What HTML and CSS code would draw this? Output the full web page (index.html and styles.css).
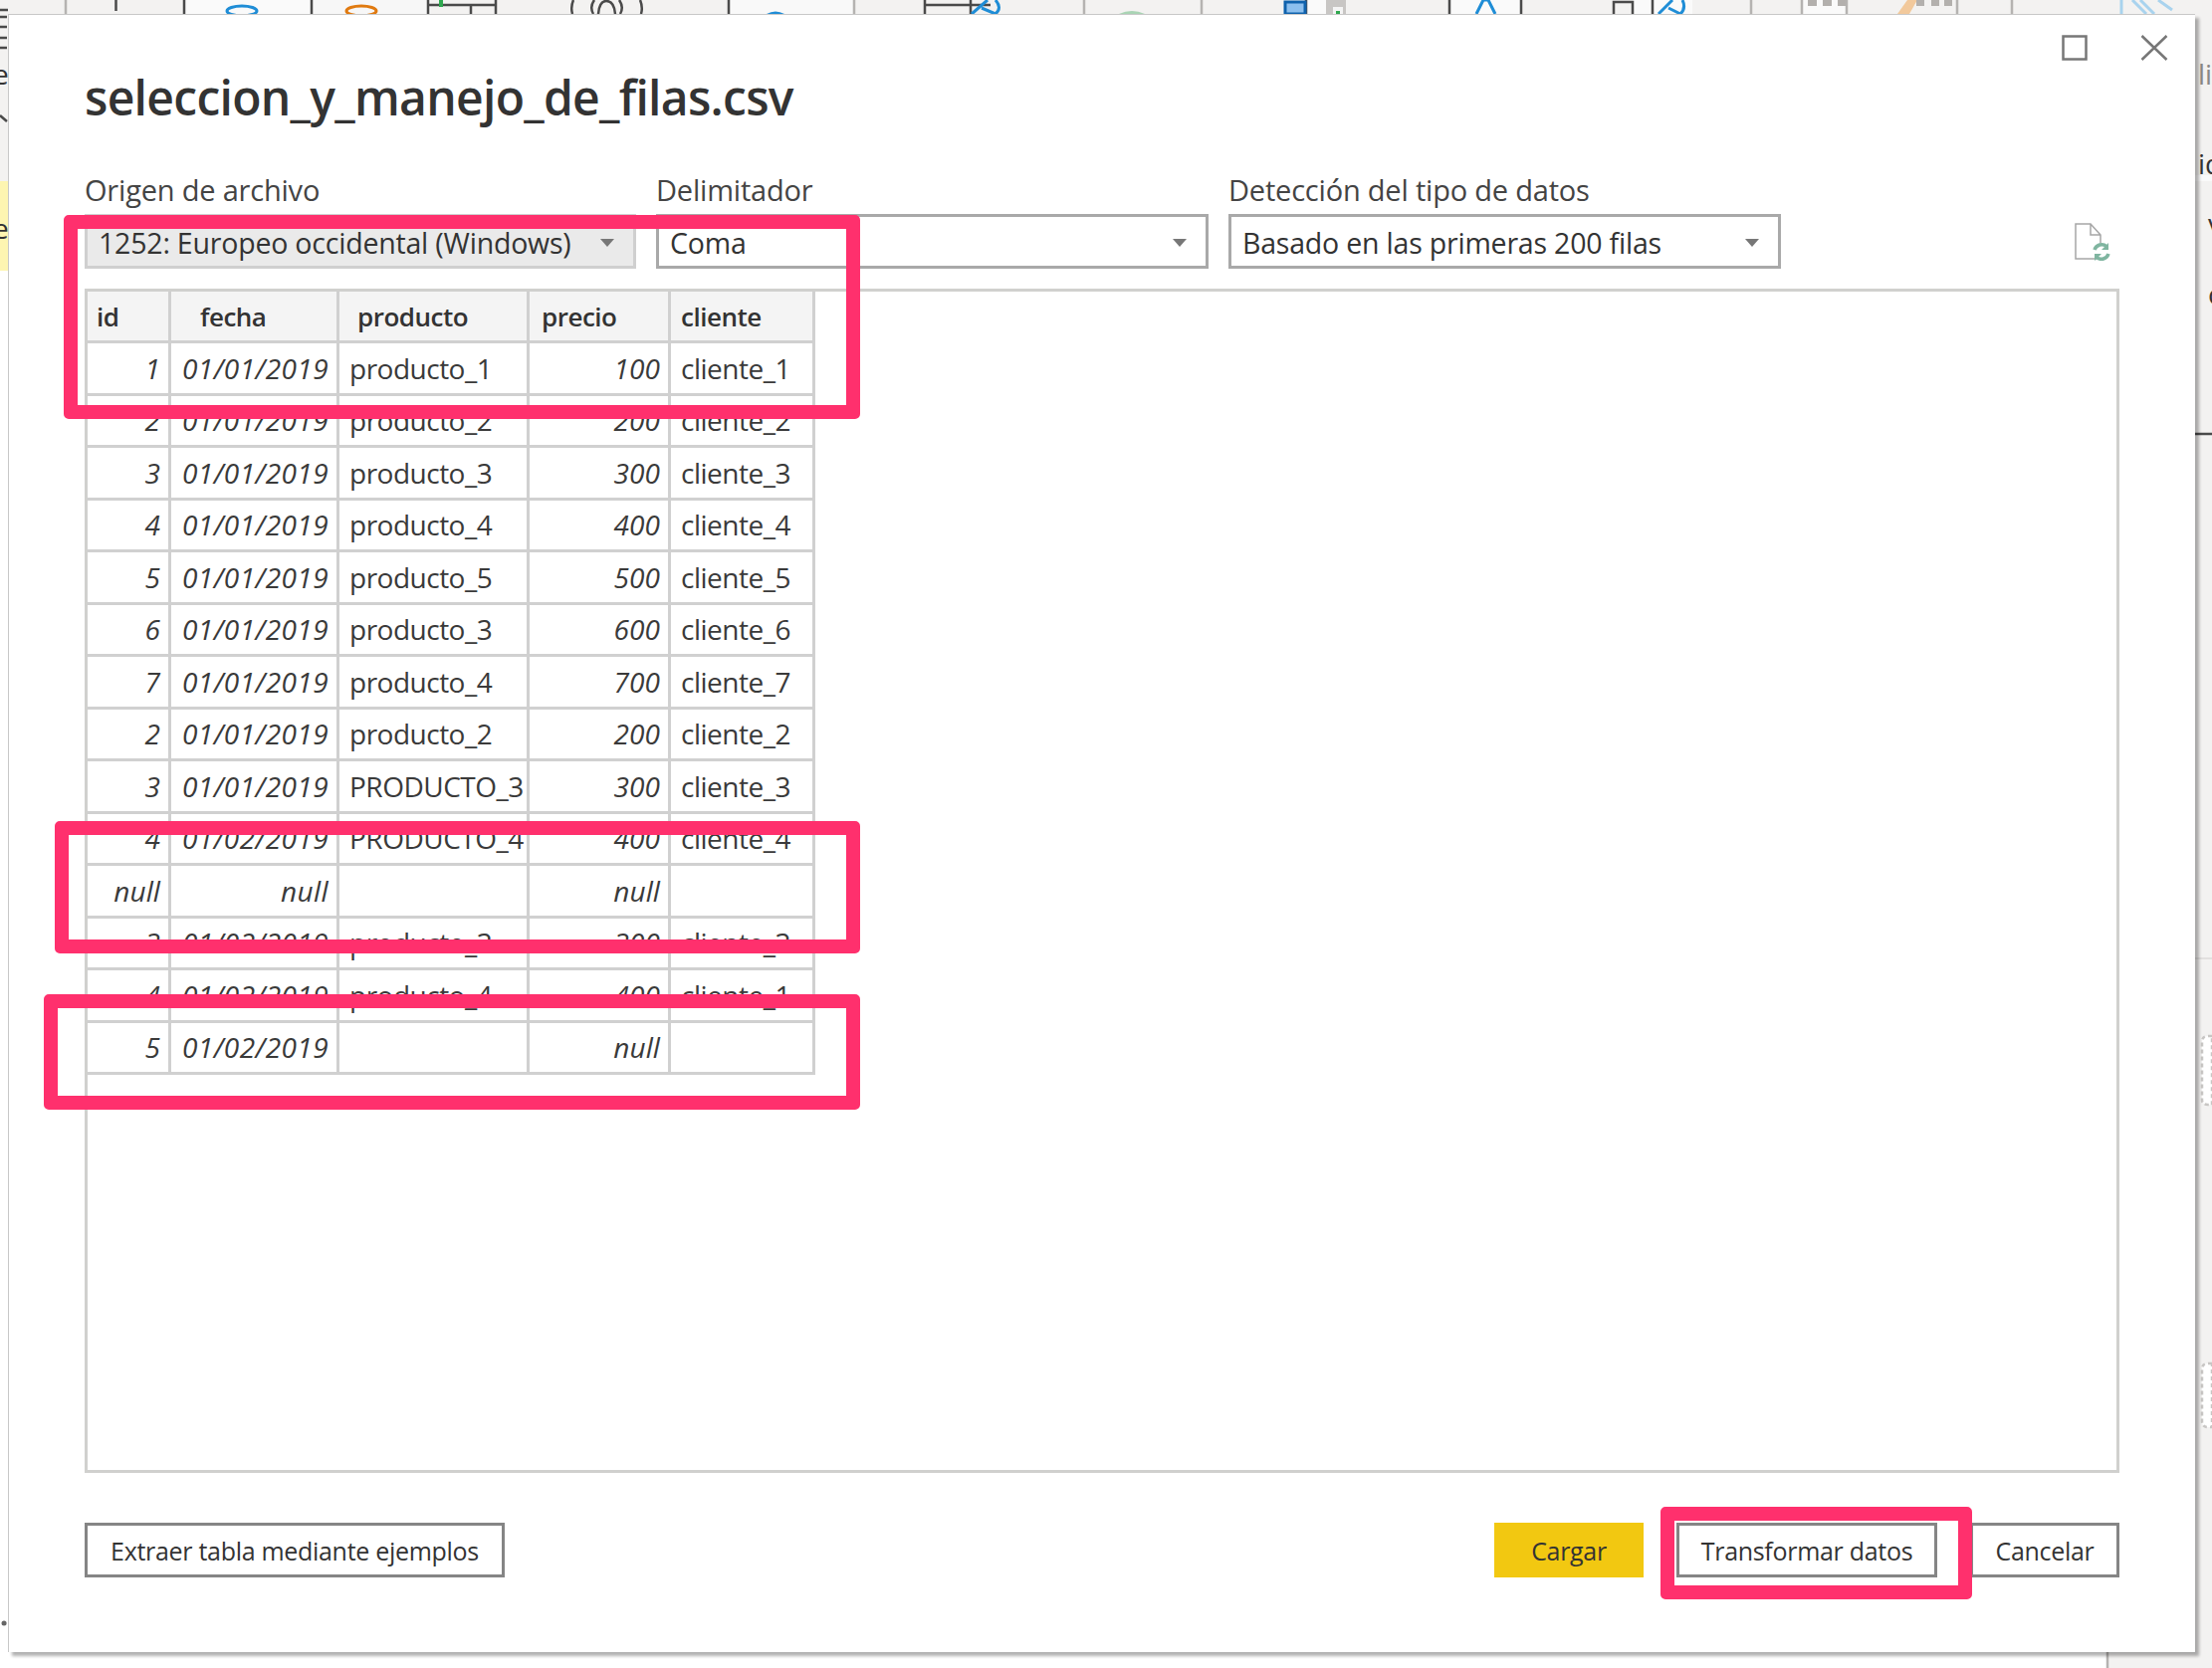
FILE: index.html
```html
<!DOCTYPE html>
<html lang="en">
<head>
  <meta charset="UTF-8">
  <title>seleccion_y_manejo_de_filas.csv</title>
  <link rel="stylesheet" href="styles.css">
</head>
<body>
  <!-- what is left of the app behind the dialog -->
  <svg class="backdrop" width="2222" height="1676" viewBox="0 0 2222 1676">
    <rect x="0" y="272" width="9" height="1404" fill="#fff"/>
    <rect x="0" y="1660" width="2117" height="16" fill="#fff"/>
    <rect x="0" y="182" width="9" height="90" fill="#fdf5b1"/>
    <rect x="185" y="0" width="128" height="14" fill="#fafafa"/>
    <rect x="313" y="0" width="120" height="14" fill="#f7f7f7"/>
    <rect x="732" y="0" width="126" height="14" fill="#f9f9f9"/>
    <rect x="1312" y="0" width="20" height="14" fill="#fafafa"/>
    <rect x="1456" y="0" width="72" height="14" fill="#fafafa"/>
    <rect x="1640" y="0" width="60" height="14" fill="#fafafa"/>
    <rect x="1810" y="0" width="45" height="14" fill="#fafafa"/>
    <g class="tick-gray">
      <path d="M66 0V14M1089 0V14M858 0V14M1207 0V14M1759 0V14M1810 0V14M1855 0V14M1966 0V14M2021 0V14"/>
    </g>
    <g class="tick-dark">
      <path d="M116.500 0V11M185 0V14M313 0V14M430 0V14M498 0V14M732 0V14M929 0V14M1312 0V14M1456 0V14M1528 0V14M1660 0V14"/>
      <path d="M430 5H498M473 5V14M995 5H975M929 5H975M975 0V14"/>
      <path d="M576 0Q573 7 575 14M643 0Q646 7 644 14M597 0Q592 7 596 14M622 0Q627 7 623 14"/>
      <path d="M601 14Q602 1 609 1Q617 1 618 14"/>
      <path d="M1621 14V2H1640V14"/>
      <path d="M0 10H8M0 17H7M0 27H7M0 38H7M0 48H7M0 116L7 122"/>
    </g>
    <ellipse cx="243" cy="11" rx="15" ry="5" fill="none" stroke="#1f8dd6" stroke-width="3"/>
    <ellipse cx="363" cy="11" rx="15" ry="5" fill="none" stroke="#e07a10" stroke-width="3"/>
    <rect x="441" y="0" width="4" height="7" fill="#2fa84f"/>
    <path d="M770 14Q779 9 788 14Z" fill="#1f8dd6"/>
    <path d="M1124 14Q1137 8 1150 14Z" fill="#a9d4b4"/>
    <rect x="1291" y="2" width="20" height="12" fill="#8cbfee" stroke="#0f62ad" stroke-width="3"/>
    <rect x="1332" y="0" width="20" height="14" fill="#c8c6c4"/>
    <rect x="1339" y="7" width="10" height="7" fill="#f4f4f4"/>
    <rect x="1342" y="11" width="4" height="3" fill="#2fa84f"/>
    <g class="stroke-blue">
      <path d="M1483 14L1490 0H1495L1502 14"/>
      <path d="M976 14L992 0M1000 0Q1007 8 1000 14L986 8"/>
      <path d="M1666 14L1680 0M1690 0Q1694 8 1688 14L1676 8"/>
    </g>
    <path d="M1906 14L1916 0H1926L1918 14Z" fill="#f2c99c"/>
    <g fill="#b3b0ad">
      <rect x="1816" y="0" width="9" height="6"/>
      <rect x="1831" y="0" width="9" height="6"/>
      <rect x="1846" y="0" width="8" height="6"/>
      <rect x="1925" y="0" width="8" height="6"/>
      <rect x="1940" y="0" width="8" height="6"/>
      <rect x="1953" y="0" width="8" height="6"/>
    </g>
    <g class="stroke-pale">
      <path d="M2131 0V14M2142 0L2156 14M2150 0L2164 14M2168 0L2182 10"/>
    </g>
    <rect x="2205" y="176" width="17" height="6" fill="#fafafa"/>
    <path d="M2205 436H2222" class="tick-dark"/>
    <path d="M2205 963H2222" class="tick-faint"/>
    <path d="M2222 1041H2218Q2212 1041 2212 1047V1105Q2212 1110 2218 1110H2222Z" class="dashed-box"/>
    <path d="M2222 1370H2218Q2212 1370 2212 1376V1428Q2212 1434 2218 1434H2222Z" class="dashed-box"/>
    <path d="M2117 1660V1676" class="tick-gray"/>
    <path d="M4 1631h.1" class="dot"/>
    <text x="-7" y="85" class="back-text">e</text>
    <text x="-7" y="240" class="back-text">e</text>
    <text x="2208" y="85" class="back-text back-text-pale">lic</text>
    <text x="2208" y="175" class="back-text">id</text>
    <text x="2218" y="235" class="back-text">v</text>
    <text x="2218" y="306" class="back-text">c</text>
  </svg>

  <div class="dialog">
    <div class="win-controls">
      <svg width="26" height="26" viewBox="0 0 26 26"><rect x="1.500" y="1.500" width="23" height="23" class="win-icon"/></svg>
      <svg width="28" height="26" viewBox="0 0 28 26"><path d="M1.500 1L26.500 25M26.500 1L1.500 25" class="win-icon"/></svg>
    </div>

    <h1 class="title">seleccion_y_manejo_de_filas.csv</h1>

    <div class="options">
      <div class="field">
        <label>Origen de archivo</label>
        <div class="dropdown disabled"><span>1252: Europeo occidental (Windows)</span><i class="arrow"></i></div>
      </div>
      <div class="field">
        <label>Delimitador</label>
        <div class="dropdown"><span>Coma</span><i class="arrow"></i></div>
      </div>
      <div class="field">
        <label>Detección del tipo de datos</label>
        <div class="dropdown"><span>Basado en las primeras 200 filas</span><i class="arrow"></i></div>
      </div>
      <svg class="refresh" width="36" height="38" viewBox="0 0 36 38">
        <path d="M1 1H16L26 12V36H1Z M16 1V12H26" fill="none" stroke="#a6a6a6" stroke-width="1.500"/>
        <circle cx="27" cy="29" r="9" fill="#fff"/>
        <path d="M20 27A7.500 7.500 0 0 1 32 23.500M34 31A7.500 7.500 0 0 1 22 34.500" fill="none" stroke="#7fb5a0" stroke-width="3.500"/>
        <path d="M34 20V27H27ZM20 38V31H27Z" fill="#7fb5a0"/>
      </svg>
    </div>

    <div class="preview">
      <table class="grid">
        <colgroup>
          <col class="c-id"><col class="c-fecha"><col class="c-producto"><col class="c-precio"><col class="c-cliente">
        </colgroup>
        <thead>
          <tr>
            <th class="h-id">id</th>
            <th class="h-fecha">fecha</th>
            <th class="h-producto">producto</th>
            <th class="h-precio">precio</th>
            <th class="h-cliente">cliente</th>
          </tr>
        </thead>
        <tbody>
          <tr><td class="num">1</td><td class="num">01/01/2019</td><td>producto_1</td><td class="num">100</td><td>cliente_1</td></tr>
          <tr><td class="num">2</td><td class="num">01/01/2019</td><td>producto_2</td><td class="num">200</td><td>cliente_2</td></tr>
          <tr><td class="num">3</td><td class="num">01/01/2019</td><td>producto_3</td><td class="num">300</td><td>cliente_3</td></tr>
          <tr><td class="num">4</td><td class="num">01/01/2019</td><td>producto_4</td><td class="num">400</td><td>cliente_4</td></tr>
          <tr><td class="num">5</td><td class="num">01/01/2019</td><td>producto_5</td><td class="num">500</td><td>cliente_5</td></tr>
          <tr><td class="num">6</td><td class="num">01/01/2019</td><td>producto_3</td><td class="num">600</td><td>cliente_6</td></tr>
          <tr><td class="num">7</td><td class="num">01/01/2019</td><td>producto_4</td><td class="num">700</td><td>cliente_7</td></tr>
          <tr><td class="num">2</td><td class="num">01/01/2019</td><td>producto_2</td><td class="num">200</td><td>cliente_2</td></tr>
          <tr><td class="num">3</td><td class="num">01/01/2019</td><td>PRODUCTO_3</td><td class="num">300</td><td>cliente_3</td></tr>
          <tr><td class="num">4</td><td class="num">01/02/2019</td><td>PRODUCTO_4</td><td class="num">400</td><td>cliente_4</td></tr>
          <tr><td class="num">null</td><td class="num">null</td><td></td><td class="num">null</td><td></td></tr>
          <tr><td class="num">3</td><td class="num">01/02/2019</td><td>producto_3</td><td class="num">300</td><td>cliente_3</td></tr>
          <tr><td class="num">4</td><td class="num">01/02/2019</td><td>producto_4</td><td class="num">400</td><td>cliente_1</td></tr>
          <tr><td class="num">5</td><td class="num">01/02/2019</td><td></td><td class="num">null</td><td></td></tr>
        </tbody>
      </table>
    </div>

    <div class="footer">
      <button class="btn btn-extract">Extraer tabla mediante ejemplos</button>
      <div class="footer-right">
        <button class="btn btn-load">Cargar</button>
        <button class="btn btn-transform">Transformar datos</button>
        <button class="btn btn-cancel">Cancelar</button>
      </div>
    </div>
  </div>

  <!-- pink marks drawn over the screenshot -->
  <div class="mark mark-top"></div>
  <div class="mark mark-null"></div>
  <div class="mark mark-last"></div>
  <div class="mark mark-transform"></div>
</body>
</html>
```

FILE: styles.css
```css
html, body {
  margin: 0;
  height: 100%;
}
body {
  position: relative;
  width: 2222px;
  height: 1676px;
  overflow: hidden;
  background-color: #f3f2f1;
  font-family: "Open Sans", "Noto Sans", sans-serif;
  color: #333;
}

/* background app */
.backdrop {
  position: absolute;
  left: 0;
  top: 0;
}
.tick-gray path, path.tick-gray {
  fill: none;
  stroke: #b5b3b1;
  stroke-width: 2.5;
}
.tick-dark path, path.tick-dark {
  fill: none;
  stroke: #4a4a4a;
  stroke-width: 2.5;
}
path.tick-faint {
  fill: none;
  stroke: #dcdad8;
  stroke-width: 1.5;
}
.stroke-blue path {
  fill: none;
  stroke: #1f8dd6;
  stroke-width: 3;
}
.stroke-pale path {
  fill: none;
  stroke: #a9d3ee;
  stroke-width: 3;
}
.dashed-box {
  fill: #fff;
  stroke: #c8c6c4;
  stroke-width: 2.500;
  stroke-dasharray: 4 3;
}
.dot {
  stroke: #666;
  stroke-width: 5;
  stroke-linecap: round;
}
.back-text {
  font-family: "Open Sans", sans-serif;
  font-size: 28px;
  fill: #333;
}
.back-text-pale {
  fill: #8a8886;
}

/* dialog */
.dialog {
  position: absolute;
  left: 8px;
  top: 14px;
  width: 2197px;
  height: 1646px;
  box-sizing: border-box;
  display: flex;
  flex-direction: column;
  padding: 20px 76px 0;
  background-color: #fff;
  border-top: 1px solid #c8c8c8;
  border-left: 1px solid #c8c8c8;
  box-shadow: 4px 4px 3px rgba(0,0,0,0.3);
}
.win-controls {
  display: flex;
  justify-content: flex-end;
  gap: 53px;
  height: 26px;
  margin-right: -49px;
}
.win-icon {
  fill: none;
  stroke: #777;
  stroke-width: 2.500;
}
.title {
  margin: -1px 0 0;
  height: 75px;
  font-size: 48px;
  font-weight: 600;
  line-height: 75px;
  letter-spacing: -0.7px;
  color: #333;
}

.options {
  display: flex;
  align-items: flex-end;
  gap: 20px;
  margin-top: 36px;
}
.field {
  width: 555px;
}
.field:first-child {
  width: 554px;
}
.field label {
  display: block;
  height: 40px;
  font-size: 29px;
  line-height: 40px;
  letter-spacing: -0.2px;
  color: #444;
  margin-bottom: 4px;
}
.dropdown {
  display: flex;
  align-items: center;
  justify-content: space-between;
  box-sizing: border-box;
  height: 55px;
  padding: 2px 19px 0 11px;
  border: 3px solid #a9a9a9;
  font-size: 28.5px;
  letter-spacing: -0.2px;
  color: #333;
}
.dropdown.disabled {
  background-color: #eaeaea;
  border-color: #cfcfcf;
}
.arrow {
  width: 0;
  height: 0;
  border-left: 7px solid transparent;
  border-right: 7px solid transparent;
  border-top: 8px solid #777;
}
.refresh {
  margin: 0 9px 8px auto;
}

/* preview */
.preview {
  box-sizing: border-box;
  height: 1190px;
  margin-top: 20px;
  border: 3px solid #d0d0ce;
}
.grid {
  border-collapse: separate;
  border-spacing: 0;
  table-layout: fixed;
  width: 731px;
  font-size: 28px;
  letter-spacing: -0.5px;
}
.c-id { width: 84px; }
.c-fecha { width: 169px; }
.c-producto { width: 191px; }
.c-precio { width: 142px; }
.c-cliente { width: 145px; }
.grid th, .grid td {
  box-sizing: border-box;
  height: 52.5px;
  padding: 0 9px 0 10px;
  border-right: 3px solid #d0d0d0;
  border-bottom: 3px solid #d0d0d0;
  white-space: nowrap;
  overflow: hidden;
  text-align: left;
  color: #3a3a3a;
}
.grid th {
  height: 52px;
  background-color: #f4f4f4;
  font-size: 26px;
  font-weight: 600;
  letter-spacing: -0.5px;
  color: #333;
}
.grid td.num {
  padding: 0 8px 0 0;
  text-align: right;
  font-style: italic;
  letter-spacing: 0.1px;
}
.grid td.num:nth-child(2) {
  letter-spacing: 0.4px;
}
.grid .h-id { padding-left: 9px; }
.grid .h-fecha { padding-left: 29px; }
.grid .h-producto { padding-left: 18px; }
.grid .h-precio { padding-left: 12px; }
.grid .h-cliente { padding-left: 10px; }

/* footer buttons */
.footer {
  display: flex;
  justify-content: space-between;
  margin-top: 50px;
}
.footer-right {
  display: flex;
  gap: 33px;
}
.btn {
  box-sizing: border-box;
  height: 55px;
  padding: 0;
  border: 3px solid #858585;
  background-color: #fff;
  font-family: inherit;
  font-size: 25px;
  letter-spacing: -0.3px;
  color: #333;
}
.btn-extract { width: 422px; }
.btn-load {
  width: 150px;
  background-color: #f2c811;
  border-color: #f2c811;
}
.btn-transform { width: 262px; }
.btn-cancel { width: 150px; }

/* annotations */
.mark {
  position: absolute;
  box-sizing: border-box;
  border: 14px solid #ff306d;
  border-radius: 5px;
}
.mark-top {
  left: 64px;
  top: 216px;
  width: 800px;
  height: 205px;
}
.mark-null {
  left: 55px;
  top: 825px;
  width: 809px;
  height: 133px;
}
.mark-last {
  left: 44px;
  top: 999px;
  width: 820px;
  height: 116px;
}
.mark-transform {
  left: 1668px;
  top: 1514px;
  width: 313px;
  height: 93px;
}
```
